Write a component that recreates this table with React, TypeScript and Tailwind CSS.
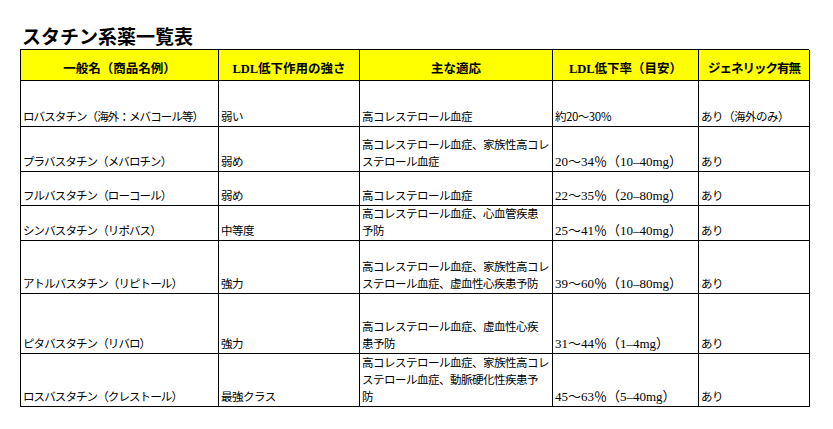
import React from "react";

const sans = "font-['Noto_Sans_CJK_JP',sans-serif] text-[11.5px] tracking-[-0.5px]";
const sansTight = "font-['Noto_Sans_CJK_JP',sans-serif] text-[11.5px] tracking-[-0.9px]";
const serif = "font-['Liberation_Serif','Noto_Sans_CJK_JP',serif] text-[13px]";

type Row = {
  h: string;
  name: string;
  strength: string;
  uses: string[];
  rate: string;
  rateSans?: boolean;
  generic: string;
};

const rows: Row[] = [
  {
    h: "h-[46px]",
    name: "ロバスタチン（海外：メバコール等）",
    strength: "弱い",
    uses: ["高コレステロール血症"],
    rate: "約20～30％",
    rateSans: true,
    generic: "あり（海外のみ）",
  },
  {
    h: "h-[45px]",
    name: "プラバスタチン（メバロチン）",
    strength: "弱め",
    uses: ["高コレステロール血症、家族性高コレ", "ステロール血症"],
    rate: "20～34％（10–40mg）",
    generic: "あり",
  },
  {
    h: "h-[34px]",
    name: "フルバスタチン（ローコール）",
    strength: "弱め",
    uses: ["高コレステロール血症"],
    rate: "22～35％（20–80mg）",
    generic: "あり",
  },
  {
    h: "h-[35px]",
    name: "シンバスタチン（リポバス）",
    strength: "中等度",
    uses: ["高コレステロール血症、心血管疾患", "予防"],
    rate: "25～41％（10–40mg）",
    generic: "あり",
  },
  {
    h: "h-[53px]",
    name: "アトルバスタチン（リピトール）",
    strength: "強力",
    uses: ["高コレステロール血症、家族性高コレ", "ステロール血症、虚血性心疾患予防"],
    rate: "39～60％（10–80mg）",
    generic: "あり",
  },
  {
    h: "h-[60px]",
    name: "ピタバスタチン（リバロ）",
    strength: "強力",
    uses: ["高コレステロール血症、虚血性心疾", "患予防"],
    rate: "31～44％（1–4mg）",
    generic: "あり",
  },
  {
    h: "h-[53px]",
    name: "ロスバスタチン（クレストール）",
    strength: "最強クラス",
    uses: ["高コレステロール血症、家族性高コレ", "ステロール血症、動脈硬化性疾患予", "防"],
    rate: "45～63％（5–40mg）",
    generic: "あり",
  },
];

const headers = [
  { t: "一般名（商品名例）", c: "" },
  { t: "LDL低下作用の強さ", c: "" },
  { t: "主な適応", c: "" },
  { t: "LDL低下率（目安）", c: "" },
  { t: "ジェネリック有無", c: "tracking-[-1px]" },
];

function Cell({ children, h, font = sans }: { children: React.ReactNode; h: string; font?: string }) {
  return (
    <div
      className={`${h} ${font} flex flex-col justify-end overflow-hidden whitespace-nowrap border-r border-b border-black pl-[2px] pb-[1px] leading-[17px] text-black`}
    >
      {children}
    </div>
  );
}

export default function App() {
  return (
    <div className="h-[429px] w-[833px] bg-white pl-[20px] pt-[23px]">
      <h1 className="ml-[2px] h-[26px] font-['Noto_Sans_CJK_JP',sans-serif] text-[19px] font-bold leading-[26px] text-black">
        スタチン系薬一覧表
      </h1>
      <div className="grid w-[789px] grid-cols-[198px_141px_193px_146px_111px] border-t border-l border-black">
        {headers.map((hd) => (
          <div
            key={hd.t}
            className={`${hd.c} flex h-[31px] items-end justify-center border-r border-b border-black bg-[#ffff00] pb-[2px] font-['Liberation_Serif','Noto_Sans_CJK_JP',serif] text-[12.5px] font-bold leading-[17px] text-black`}
          >
            {hd.t}
          </div>
        ))}
        {rows.map((r) => (
          <React.Fragment key={r.name}>
            <Cell h={r.h} font={sansTight}>
              {r.name}
            </Cell>
            <Cell h={r.h}>{r.strength}</Cell>
            <Cell h={r.h}>
              {r.uses.map((u) => (
                <span key={u}>{u}</span>
              ))}
            </Cell>
            <Cell h={r.h} font={r.rateSans ? sans : serif}>
              {r.rate}
            </Cell>
            <Cell h={r.h}>{r.generic}</Cell>
          </React.Fragment>
        ))}
      </div>
    </div>
  );
}
